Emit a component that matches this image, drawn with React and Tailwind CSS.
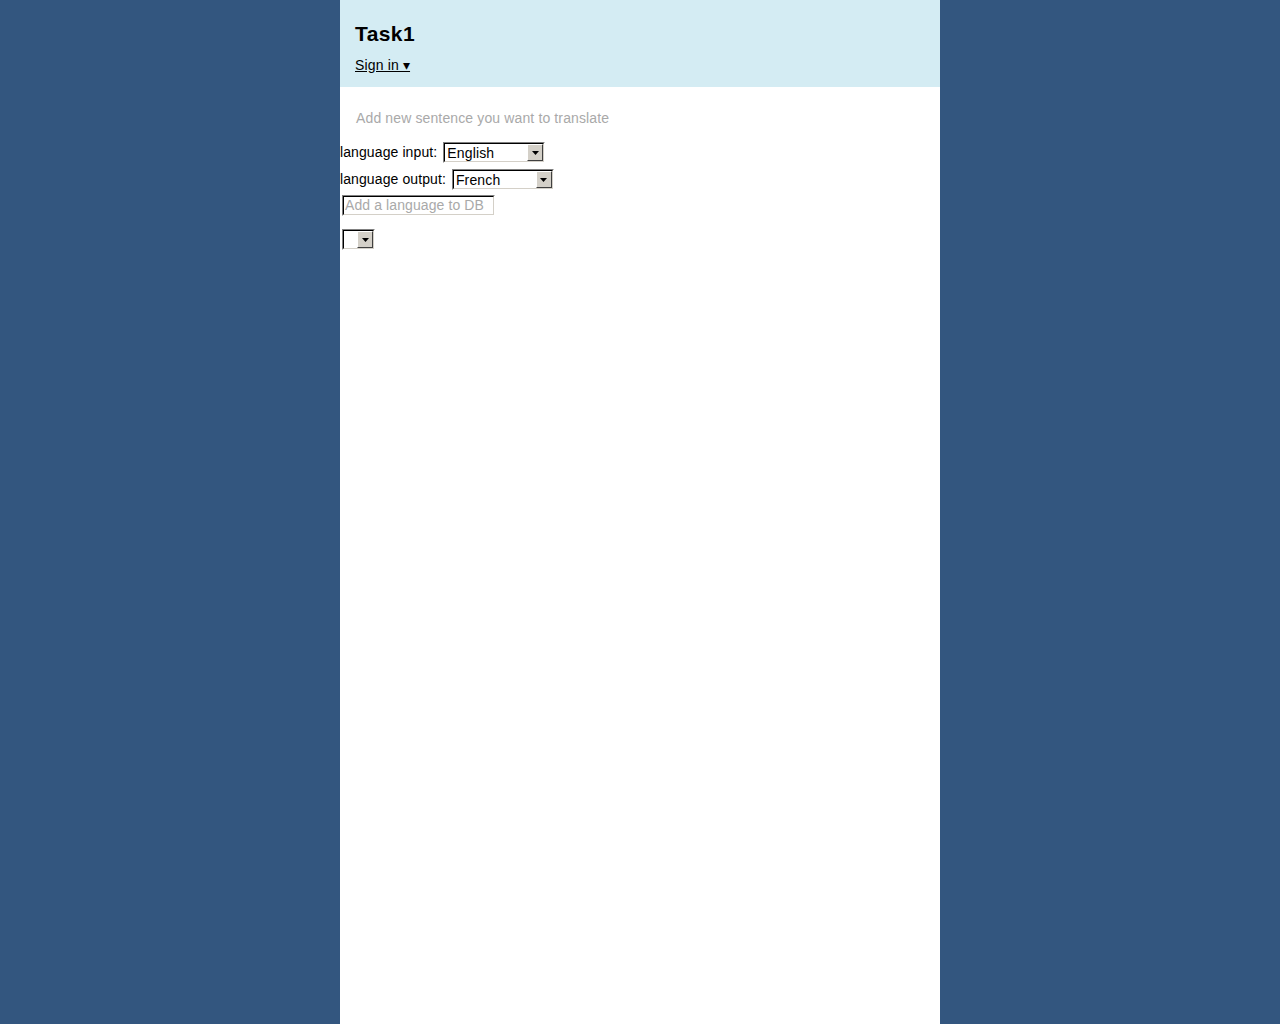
import React from "react";

function Arrow() {
  return (
    <div className="flex h-full w-[16px] items-center justify-center border-t border-l border-white border-r border-b border-r-[#404040] border-b-[#404040] bg-[#d4d0c8]">
      <svg width="7" height="4" viewBox="0 0 7 4">
        <polygon points="0,0 7,0 3.5,4" fill="#000" />
      </svg>
    </div>
  );
}

function Select({ value, width }) {
  return (
    <div
      className="border-t border-l border-[#808080] border-r border-b border-r-white border-b-white"
      style={{ width }}
    >
      <div className="flex h-[19px] items-stretch border-t border-l border-black border-r border-b border-r-[#d4d0c8] border-b-[#d4d0c8] bg-white">
        <div className="flex flex-1 items-center pl-[2px] text-[14px] leading-none tracking-[0.15px] text-black">
          {value}
        </div>
        <Arrow />
      </div>
    </div>
  );
}

export default function App() {
  return (
    <div className="flex min-h-[1024px] justify-center bg-[#33567f] font-['Liberation_Sans',Arial,sans-serif]">
      <div className="w-[600px] bg-white">
        <div className="h-[87px] bg-[#d4ecf3] px-[15px] pt-[21px]">
          <div className="text-[21px] font-bold leading-[25px] tracking-[0.4px] text-black">Task1</div>
          <div className="mt-[11px] text-[14px] leading-[16px] tracking-[0.15px] text-black underline">Sign in ▾</div>
        </div>
        <div className="pt-[23px]">
          <div className="pl-[16px] text-[14px] leading-[16px] tracking-[0.13px] text-[#a9a9a9]">
            Add new sentence you want to translate
          </div>
          <div className="mt-[16px] flex items-center gap-[6px] text-[14px] tracking-[0.1px] text-black">
            <span>language input:</span>
            <Select value="English" width={102} />
          </div>
          <div className="mt-[6px] flex items-center gap-[6px] text-[14px] tracking-[0.1px] text-black">
            <span>language output:</span>
            <Select value="French" width={102} />
          </div>
          <div className="ml-[2px] mt-[5px] w-[153px] border-t border-l border-[#808080] border-r border-b border-r-white border-b-white">
            <div className="flex h-[19px] items-center border-t border-l border-black border-r border-b border-r-[#d4d0c8] border-b-[#d4d0c8] pl-[1px] text-[14px] tracking-[0.1px] text-[#a9a9a9]">
              Add a language to DB
            </div>
          </div>
          <div className="ml-[2px] mt-[13px]">
            <Select value="" width={33} />
          </div>
        </div>
      </div>
    </div>
  );
}
